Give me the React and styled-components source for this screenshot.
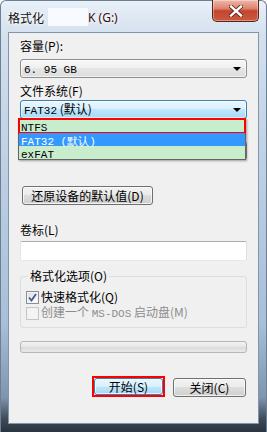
import React from "react";
import styled, { createGlobalStyle } from "styled-components";

const GlobalStyle = createGlobalStyle`
  html, body {
    margin: 0;
    padding: 0;
  }
  body {
    width: 267px;
    height: 432px;
    overflow: hidden;
    background: #fff;
    font-family: "Noto Sans CJK SC", "Noto Sans", sans-serif;
  }
  * {
    box-sizing: border-box;
  }
`;

const Window = styled.div`
  width: 267px;
  height: 432px;
  display: flex;
  flex-direction: column;
  padding: 0 7px 8px;
  border-radius: 6px 6px 0 0;
  background: linear-gradient(
    180deg,
    #e9f0f8 0%,
    #d3e0ee 8%,
    #bccfe3 40%,
    #a9bfd7 75%,
    #7f95ad 92%,
    #3e4a58 97%,
    #2a3440 100%
  );
  border: 1px solid #6d7f94;
  border-bottom: none;
`;

const TitleBar = styled.div`
  height: 31px;
  display: flex;
  align-items: flex-start;
`;

const TitleText = styled.span`
  margin-top: 9px;
  font-size: 12px;
  line-height: 16px;
  color: #101010;
  text-shadow: 0 0 5px #fff, 0 0 3px #fff;
`;

const Redacted = styled.span`
  display: inline-block;
  width: 40px;
  height: 18px;
  margin: 7px 0 0 4px;
  background: #f7fbff;
`;

const DriveText = styled(TitleText)`
  font-family: "Noto Sans", sans-serif;
  color: #3a0c0c;
`;

const CloseButton = styled.div`
  margin-left: auto;
  margin-top: -1px;
  width: 47px;
  height: 22px;
  border: 1px solid #5e2119;
  border-top: none;
  border-radius: 0 0 5px 5px;
  background: linear-gradient(
    180deg,
    #efb8aa 0%,
    #dc8570 40%,
    #c5452d 52%,
    #c85a40 100%
  );
  box-shadow: inset 0 0 0 1px rgba(255, 255, 255, 0.35);
  display: flex;
  align-items: center;
  justify-content: center;
`;

const Panel = styled.div`
  flex: 1;
  background: #f0f0f0;
  border: 1px solid #8195ab;
  padding: 6px 11px 0;
  display: flex;
  flex-direction: column;
`;

const Label = styled.div`
  font-size: 12px;
  line-height: 14px;
  min-height: 14px;
  color: ${({ $disabled }) => ($disabled ? "#8d8d8d" : "#000")};
  margin-top: ${({ $mt }) => $mt || 0}px;
  white-space: nowrap;
`;

const Mono = styled.span`
  font-family: "Liberation Mono", monospace;
  font-size: 11px;
`;

const Select = styled.div`
  position: relative;
  height: 19px;
  margin-top: ${({ $mt }) => $mt || 0}px;
  border: 1px solid ${({ $focused }) => ($focused ? "#3c7fb1" : "#8e8f8f")};
  border-radius: 3px;
  background: ${({ $focused }) =>
    $focused
      ? "linear-gradient(180deg, #eaf6fd 0%, #d9f0fc 50%, #bee6fd 50%, #a7d9f5 100%)"
      : "linear-gradient(180deg, #f7f7f7 0%, #efefef 50%, #e5e5e5 50%, #dedede 100%)"};
  box-shadow: inset 0 0 0 1px rgba(255, 255, 255, 0.6);
  display: flex;
  align-items: center;
  padding: 0 5px 0 3px;
  font-size: 12px;
  line-height: 14px;
  color: #000;
`;

const Value = styled.span`
  flex: 1;
  white-space: nowrap;
`;

const DropList = styled.div`
  position: absolute;
  top: 17px;
  left: -3px;
  right: 0;
  border: 1px solid #646464;
  background: #c7edcc;
  box-shadow: 1px 1px 2px rgba(0, 0, 0, 0.35);
  z-index: 2;
`;

const Option = styled.div`
  height: ${({ $h }) => $h || 13}px;
  line-height: ${({ $h }) => $h || 13}px;
  padding-left: 2px;
  font-size: 12px;
  white-space: nowrap;
  color: ${({ $selected }) => ($selected ? "#fff" : "#000")};
  background: ${({ $selected }) => ($selected ? "#3399ff" : "transparent")};
  box-shadow: ${({ $marked }) =>
    $marked ? "0 0 0 1px #ff0000, inset 0 0 0 1px #ff0000" : "none"};
`;

const Button = styled.div`
  width: ${({ $w }) => $w}px;
  height: ${({ $h }) => $h || 19}px;
  margin-left: ${({ $ml }) => $ml || 0}px;
  margin-top: ${({ $mt }) => $mt || 0}px;
  border: 1px solid ${({ $primary }) => ($primary ? "#3c7fb1" : "#707070")};
  border-radius: 3px;
  background: ${({ $primary }) =>
    $primary
      ? "linear-gradient(180deg, #eaf6fd 0%, #d9f0fc 50%, #bee6fd 50%, #a7d9f5 100%)"
      : "linear-gradient(180deg, #f2f2f2 0%, #ebebeb 50%, #dddddd 50%, #cfcfcf 100%)"};
  box-shadow: inset 0 0 0 1px rgba(255, 255, 255, 0.7);
  display: flex;
  align-items: center;
  justify-content: center;
  font-size: 12px;
  line-height: 14px;
  color: #000;
  white-space: nowrap;
`;

const Highlight = styled.div`
  border: 2px solid #ff0000;
`;

const TextInput = styled.div`
  height: 20px;
  margin-top: 4px;
  background: #fff;
  border: 1px solid;
  border-color: #abadb3 #dbdfe6 #e3e9ef #e2e3ea;
  border-radius: 2px;
`;

const Group = styled.fieldset`
  margin: 8px 0 0;
  padding: 6px 5px 6px;
  border: 1px solid #d5dfe5;
  border-radius: 3px;
  min-width: 0;
`;

const Legend = styled.legend`
  margin-left: 2px;
  padding: 0 2px;
  font-size: 12px;
  line-height: 14px;
  color: #000;
`;

const CheckRow = styled.div`
  height: 16px;
  display: flex;
  align-items: center;
  gap: 2px;
`;

const Box = styled.div`
  width: 13px;
  height: 13px;
  border: 1px solid ${({ $disabled }) => ($disabled ? "#c6c6c6" : "#8e8f8f")};
  background: ${({ $disabled }) =>
    $disabled
      ? "#f4f4f4"
      : "linear-gradient(135deg, #dcdcdc 0%, #f6f6f6 70%, #ffffff 100%)"};
  box-shadow: inset 0 0 0 1px ${({ $disabled }) => ($disabled ? "#f0f0f0" : "#f4f4f4")};
  display: flex;
  align-items: center;
  justify-content: center;
`;

const Progress = styled.div`
  height: 12px;
  margin-top: 13px;
  border: 1px solid #b6b6b6;
  border-radius: 3px;
  background: linear-gradient(180deg, #f3f3f3 0%, #e6e6e6 50%, #dadada 50%, #e9e9e9 100%);
`;

const Footer = styled.div`
  margin-top: 23px;
  display: flex;
  justify-content: flex-end;
  align-items: flex-end;
  gap: 8px;
  padding-right: 1px;
`;

const Arrow = () => (
  <svg width="8" height="4" viewBox="0 0 8 4">
    <path d="M0 0 H8 L4 4 Z" fill="#000" />
  </svg>
);

const Check = () => (
  <svg width="9" height="9" viewBox="0 0 9 9">
    <path
      d="M1 4.5 L3.5 7.5 L8 1"
      fill="none"
      stroke="#3d5a9e"
      strokeWidth="1.8"
    />
  </svg>
);

const CloseX = () => (
  <svg width="14" height="12" viewBox="0 0 14 12">
    <path
      d="M2 1.5 L12 10.5 M12 1.5 L2 10.5"
      stroke="#5a1a12"
      strokeWidth="4"
      strokeLinecap="square"
    />
    <path
      d="M2 1.5 L12 10.5 M12 1.5 L2 10.5"
      stroke="#ffffff"
      strokeWidth="2.4"
      strokeLinecap="square"
    />
  </svg>
);

const App = () => {
  const options = [
    { label: "NTFS", marked: true, h: 14 },
    { label: "FAT32 (默认)", selected: true },
    { label: "exFAT" },
  ];
  return (
    <>
      <GlobalStyle />
      <Window>
        <TitleBar>
          <TitleText>格式化</TitleText>
          <Redacted />
          <DriveText>K (G:)</DriveText>
          <CloseButton>
            <CloseX />
          </CloseButton>
        </TitleBar>
        <Panel>
          <Label>容量(P):</Label>
          <Select $mt={6}>
            <Value>
              <Mono>6. 95 GB</Mono>
            </Value>
            <Arrow />
          </Select>
          <Label $mt={6}>文件系统(F)</Label>
          <Select $mt={2} $focused>
            <Value>
              <Mono>FAT32</Mono> (默认)
            </Value>
            <Arrow />
            <DropList>
              {options.map((o) => (
                <Option key={o.label} $selected={o.selected} $marked={o.marked} $h={o.h}>
                  <Mono>{o.label}</Mono>
                </Option>
              ))}
            </DropList>
          </Select>
          {/* allocation-size field, hidden under the open list */}
          <Label $mt={6} />
          <Select $mt={2}>
            <Value />
            <Arrow />
          </Select>
          <Button $w={131} $ml={2} $mt={26}>
            还原设备的默认值(D)
          </Button>
          <Label $mt={18}>卷标(L)</Label>
          <TextInput />
          <Group>
            <Legend>格式化选项(O)</Legend>
            <CheckRow>
              <Box>
                <Check />
              </Box>
              <Label>快速格式化(Q)</Label>
            </CheckRow>
            <CheckRow>
              <Box $disabled />
              <Label $disabled>
                创建一个 <Mono>MS-DOS</Mono> 启动盘(M)
              </Label>
            </CheckRow>
          </Group>
          <Progress />
          <Footer>
            <Highlight>
              <Button $w={69} $h={17} $primary>
                开始(S)
              </Button>
            </Highlight>
            <Button $w={73}>关闭(C)</Button>
          </Footer>
        </Panel>
      </Window>
    </>
  );
};

export default App;
